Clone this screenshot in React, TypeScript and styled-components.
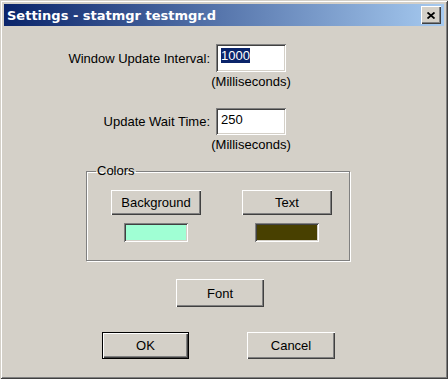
import styled, { createGlobalStyle } from 'styled-components';

const Global = createGlobalStyle`
  html, body { margin: 0; padding: 0; background: #d4d0c8; }
  #root { width: 448px; height: 379px; }
`;

const face = '#d4d0c8';
const shadow = '#808080';
const darkShadow = '#404040';
const hilite = '#ffffff';

const Window = styled.div`
  box-sizing: border-box;
  width: 448px;
  height: 379px;
  padding: 4px;
  background: ${face};
  box-shadow: inset 1px 1px 0 ${face}, inset -1px -1px 0 ${darkShadow},
    inset 2px 2px 0 ${hilite}, inset -2px -2px 0 ${shadow};
  display: flex;
  flex-direction: column;
  font-family: 'Liberation Sans', Arial, sans-serif;
  font-size: 13px;
  color: #000;
`;

const TitleBar = styled.div`
  height: 22px;
  display: flex;
  align-items: center;
  justify-content: space-between;
  padding: 0 3px;
  background: linear-gradient(to right, #0a246a, #a6caf0);
`;

const Title = styled.span`
  color: #fff;
  font-family: 'DejaVu Sans', Verdana, sans-serif;
  font-weight: bold;
  font-size: 13px;
`;

const CloseButton = styled.div`
  box-sizing: border-box;
  width: 20px;
  height: 18px;
  display: flex;
  align-items: center;
  justify-content: center;
  background: ${face};
  box-shadow: inset 1px 1px 0 ${hilite}, inset -1px -1px 0 ${darkShadow},
    inset -2px -2px 0 ${shadow};
`;

const Body = styled.div`
  display: flex;
  flex-direction: column;
  align-items: flex-start;
  padding-top: 18px;
`;

const FieldGrid = styled.div`
  display: grid;
  grid-template-columns: 206px 70px;
  column-gap: 6px;
  align-items: center;
`;

const Label = styled.label`
  text-align: right;
  white-space: nowrap;
`;

const Field = styled.div<{ $h: number }>`
  box-sizing: border-box;
  height: ${(p) => p.$h}px;
  background: #fff;
  padding: 4px 5px;
  box-shadow: inset 1px 1px 0 ${shadow}, inset -1px -1px 0 ${hilite},
    inset 2px 2px 0 ${darkShadow}, inset -2px -2px 0 ${face};
  line-height: 16px;
`;

const Selected = styled.span`
  background: #0a246a;
  color: #fff;
`;

const Units = styled.div<{ $gapBelow: number }>`
  grid-column: 2;
  justify-self: center;
  white-space: nowrap;
  line-height: 16px;
  margin: 2px 0 ${(p) => p.$gapBelow}px;
`;

const Group = styled.fieldset`
  box-sizing: border-box;
  margin: 11px 0 0 82px;
  width: 264px;
  padding: 12px 0 18px 24px;
  border: 1px solid ${shadow};
  box-shadow: 1px 1px 0 ${hilite}, inset 1px 1px 0 ${hilite};
  display: grid;
  grid-template-columns: 90px 90px;
  column-gap: 41px;
  row-gap: 8px;
  justify-items: center;
`;

const Legend = styled.legend`
  padding: 0 1px;
  margin-left: -15px;
  line-height: 14px;
`;

const Button = styled.button<{ $w: number; $h: number; $default?: boolean }>`
  box-sizing: border-box;
  width: ${(p) => p.$w}px;
  height: ${(p) => p.$h}px;
  padding: 0;
  border: ${(p) => (p.$default ? '1px solid #000' : 'none')};
  background: ${face};
  font: inherit;
  color: #000;
  box-shadow: inset 1px 1px 0 ${hilite}, inset -1px -1px 0 ${darkShadow},
    inset -2px -2px 0 ${shadow};
`;

const Swatch = styled.div<{ $color: string }>`
  box-sizing: border-box;
  width: 64px;
  height: 19px;
  background: ${(p) => p.$color};
  box-shadow: inset 1px 1px 0 ${shadow}, inset -1px -1px 0 ${hilite},
    inset 2px 2px 0 ${darkShadow}, inset -2px -2px 0 ${face};
`;

const FontRow = styled.div`
  margin: 18px 0 0 172px;
`;

const ActionRow = styled.div`
  display: flex;
  gap: 58px;
  margin: 25px 0 0 98px;
`;

export default function App() {
  return (
    <>
      <Global />
      <Window>
        <TitleBar>
          <Title>Settings - statmgr testmgr.d</Title>
          <CloseButton>
            <svg width="8" height="7" viewBox="0 0 8 7">
              <path d="M0.5 0.5 L7.5 6.5 M7.5 0.5 L0.5 6.5" stroke="#000" strokeWidth="1.8" />
            </svg>
          </CloseButton>
        </TitleBar>
        <Body>
          <FieldGrid>
            <Label>Window Update Interval:</Label>
            <Field $h={28}>
              <Selected>1000</Selected>
            </Field>
            <Units $gapBelow={18}>(Milliseconds)</Units>
            <Label>Update Wait Time:</Label>
            <Field $h={27}>250</Field>
            <Units $gapBelow={0}>(Milliseconds)</Units>
          </FieldGrid>
          <Group>
            <Legend>Colors</Legend>
            <Button $w={90} $h={25}>Background</Button>
            <Button $w={90} $h={25}>Text</Button>
            <Swatch $color="#a0ffd4" />
            <Swatch $color="#484000" />
          </Group>
          <FontRow>
            <Button $w={88} $h={28}>Font</Button>
          </FontRow>
          <ActionRow>
            <Button $w={87} $h={27} $default>OK</Button>
            <Button $w={88} $h={27}>Cancel</Button>
          </ActionRow>
        </Body>
      </Window>
    </>
  );
}
